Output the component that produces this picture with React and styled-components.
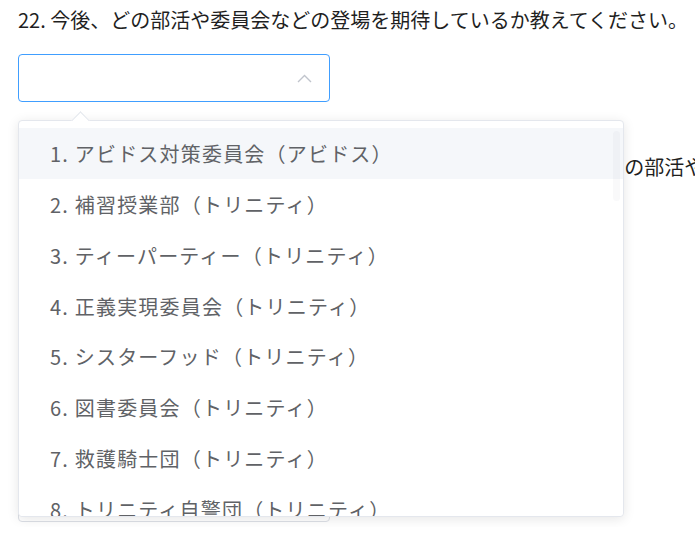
import React from 'react';
import styled, { createGlobalStyle } from 'styled-components';

const options = [
  'アビドス対策委員会（アビドス）',
  '補習授業部（トリニティ）',
  'ティーパーティー（トリニティ）',
  '正義実現委員会（トリニティ）',
  'シスターフッド（トリニティ）',
  '図書委員会（トリニティ）',
  '救護騎士団（トリニティ）',
  'トリニティ自警団（トリニティ）',
  '放課後スイーツ部（トリニティ）',
  '美食研究会（ゲヘナ）',
];

const App = () => {
  return (
    <>
      <GlobalStyle />
      <Page>
        <Question>
          <Title>22. 今後、どの部活や委員会などの登場を期待しているか教えてください。</Title>
          <SelectWrap>
            <SelectBox $focused>
              <svg width="15" height="9" viewBox="0 0 15 9">
                <polyline points="1,8 7.5,1.5 14,8" fill="none" stroke="#c0c4cc" strokeWidth="1.4" />
              </svg>
            </SelectBox>
            <Dropdown>
              <Arrow />
              <OptionList>
                {options.map((label, i) => (
                  <Option key={label} $hover={i === 0}>
                    {i + 1}. {label}
                  </Option>
                ))}
              </OptionList>
              <Thumb />
            </Dropdown>
          </SelectWrap>
        </Question>

        <Question>
          <Title>23. これまでのメインストーリーで登場した、他の 3つの学園の全ての部活や委員会の中で好きなものを教えてください。</Title>
          <TextBox />
        </Question>
      </Page>
    </>
  );
};

const GlobalStyle = createGlobalStyle`
  body {
    margin: 0;
    background: #fff;
    font-family: "Noto Sans CJK JP", "Noto Sans", sans-serif;
    overflow: hidden;
  }
`;
const Page = styled.div`
  padding: 5px 18px;
  display: flex;
  flex-direction: column;
  gap: 50px;
`;
const Question = styled.div`
  display: flex;
  flex-direction: column;
  gap: 19px;
`;
const Title = styled.div`
  font-size: 20px;
  line-height: 30px;
  color: #1f1f1f;
  white-space: nowrap;
`;
const SelectWrap = styled.div`
  position: relative;
  z-index: 2;
`;
const SelectBox = styled.div`
  box-sizing: border-box;
  width: 312px;
  height: 48px;
  border: 1px solid ${(p) => (p.$focused ? '#409eff' : '#dcdfe6')};
  border-radius: 4px;
  display: flex;
  align-items: center;
  justify-content: flex-end;
  padding-right: 17px;
`;
const Dropdown = styled.div`
  position: absolute;
  top: 66px;
  left: 0;
  box-sizing: border-box;
  width: 606px;
  height: 397px;
  background: #fff;
  border: 1px solid #e4e7ed;
  border-radius: 4px;
  box-shadow: 0 2px 12px 0 rgba(0, 0, 0, 0.1);
`;
const Arrow = styled.div`
  position: absolute;
  top: -7px;
  left: 55px;
  width: 12px;
  height: 12px;
  background: #fff;
  border-top: 1px solid #e4e7ed;
  border-left: 1px solid #e4e7ed;
  transform: rotate(45deg);
`;
const OptionList = styled.div`
  position: relative;
  height: 100%;
  padding-top: 7px;
  box-sizing: border-box;
  overflow: hidden;
  border-radius: 4px;
`;
const Option = styled.div`
  height: 50.86px;
  padding-left: 31px;
  display: flex;
  align-items: center;
  font-size: 20px;
  letter-spacing: 1.2px;
  color: #606266;
  white-space: nowrap;
  background: ${(p) => (p.$hover ? '#f5f7fa' : '#fff')};
`;
const Thumb = styled.div`
  position: absolute;
  top: 10px;
  right: 3px;
  width: 7px;
  height: 70px;
  border-radius: 4px;
  background: rgba(144, 147, 153, 0.05);
`;
const TextBox = styled.div`
  box-sizing: border-box;
  width: 312px;
  height: 321px;
  border: 1px solid #dcdfe6;
  border-radius: 4px;
`;

export default App;
